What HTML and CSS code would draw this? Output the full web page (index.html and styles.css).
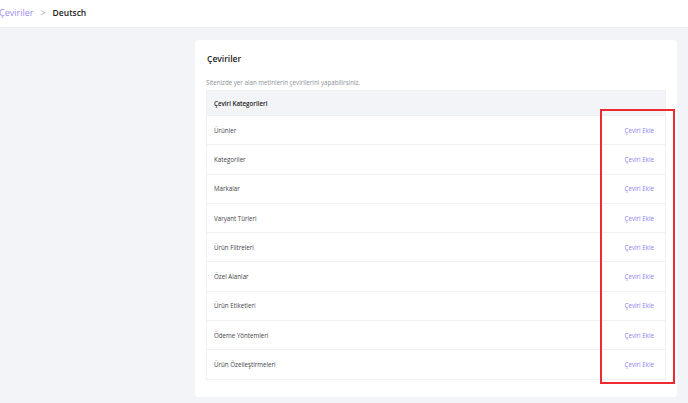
FILE: index.html
```html
<!DOCTYPE html>
<html lang="tr">
<head>
<meta charset="utf-8">
<title>Çeviriler - Deutsch</title>
<link rel="stylesheet" href="styles.css">
</head>
<body>
<header class="topbar">
  <nav class="crumbs">
    <a class="crumb-link" href="#">Çeviriler</a>
    <span class="crumb-sep">&gt;</span>
    <span class="crumb-current">Deutsch</span>
  </nav>
</header>
<main class="content">
  <section class="card">
    <h1 class="card-title">Çeviriler</h1>
    <p class="card-sub">Sitenizde yer alan metinlerin çevirilerini yapabilirsiniz.</p>
    <div class="table">
      <div class="thead">Çeviri Kategorileri</div>
      <div class="row"><span>Ürünler</span><a href="#">Çeviri Ekle</a></div>
      <div class="row"><span>Kategoriler</span><a href="#">Çeviri Ekle</a></div>
      <div class="row"><span>Markalar</span><a href="#">Çeviri Ekle</a></div>
      <div class="row"><span>Varyant Türleri</span><a href="#">Çeviri Ekle</a></div>
      <div class="row"><span>Ürün Filtreleri</span><a href="#">Çeviri Ekle</a></div>
      <div class="row"><span>Özel Alanlar</span><a href="#">Çeviri Ekle</a></div>
      <div class="row"><span>Ürün Etiketleri</span><a href="#">Çeviri Ekle</a></div>
      <div class="row"><span>Ödeme Yöntemleri</span><a href="#">Çeviri Ekle</a></div>
      <div class="row"><span>Ürün Özelleştirmeleri</span><a href="#">Çeviri Ekle</a></div>
    </div>
  </section>
</main>
<div class="highlight"></div>
</body>
</html>
```

FILE: styles.css
```css
* { box-sizing: border-box; }
html, body { margin: 0; padding: 0; }
body {
  background: #f3f4f7;
  font-family: "Open Sans", "Noto Sans", sans-serif;
  color: #333;
  width: 688px;
  height: 403px;
  overflow: hidden;
  position: relative;
}
.topbar {
  height: 28px;
  background: #fff;
  display: flex;
  align-items: center;
  border-bottom: 1px solid #eceef2;
}
.crumbs {
  display: flex;
  align-items: center;
  gap: 7px;
  font-size: 9px;
  margin-left: -1px;
  margin-top: -2px;
}
.crumb-link { color: #9d8cf5; text-decoration: none; }
.crumb-sep { color: #a0a4ab; }
.crumb-current { color: #222; font-weight: 600; font-size: 8.5px; }
.content {
  padding: 12px 11px 0 195px;
}
.card {
  background: #fff;
  border-radius: 4px;
  padding: 11px 11px 17px 11px;
}
.card-title {
  margin: 0;
  font-size: 8.5px;
  font-weight: 600;
  color: #222;
  line-height: 16px;
  padding-left: 1px;
}
.card-sub {
  margin: 9px 0 0 0;
  font-size: 6.2px;
  color: #8a8f96;
  line-height: 14px;
}
.table {
  border: 1px solid #eef0f3;
}
.thead {
  height: 24px;
  background: #f3f4f7;
  display: flex;
  align-items: center;
  padding-left: 7px;
  font-size: 6.2px;
  font-weight: 600;
  color: #222;
}
.row {
  height: 29.3px;
  display: flex;
  align-items: center;
  justify-content: space-between;
  padding: 0 11px 0 7px;
  border-top: 1px solid #eef0f3;
  font-size: 6.2px;
  color: #3f4349;
}
.row a {
  color: #8c7df5;
  text-decoration: none;
}
.highlight {
  position: absolute;
  left: 600px;
  top: 109px;
  width: 75px;
  height: 275px;
  border: 2px solid #ec2a2f;
}
```
